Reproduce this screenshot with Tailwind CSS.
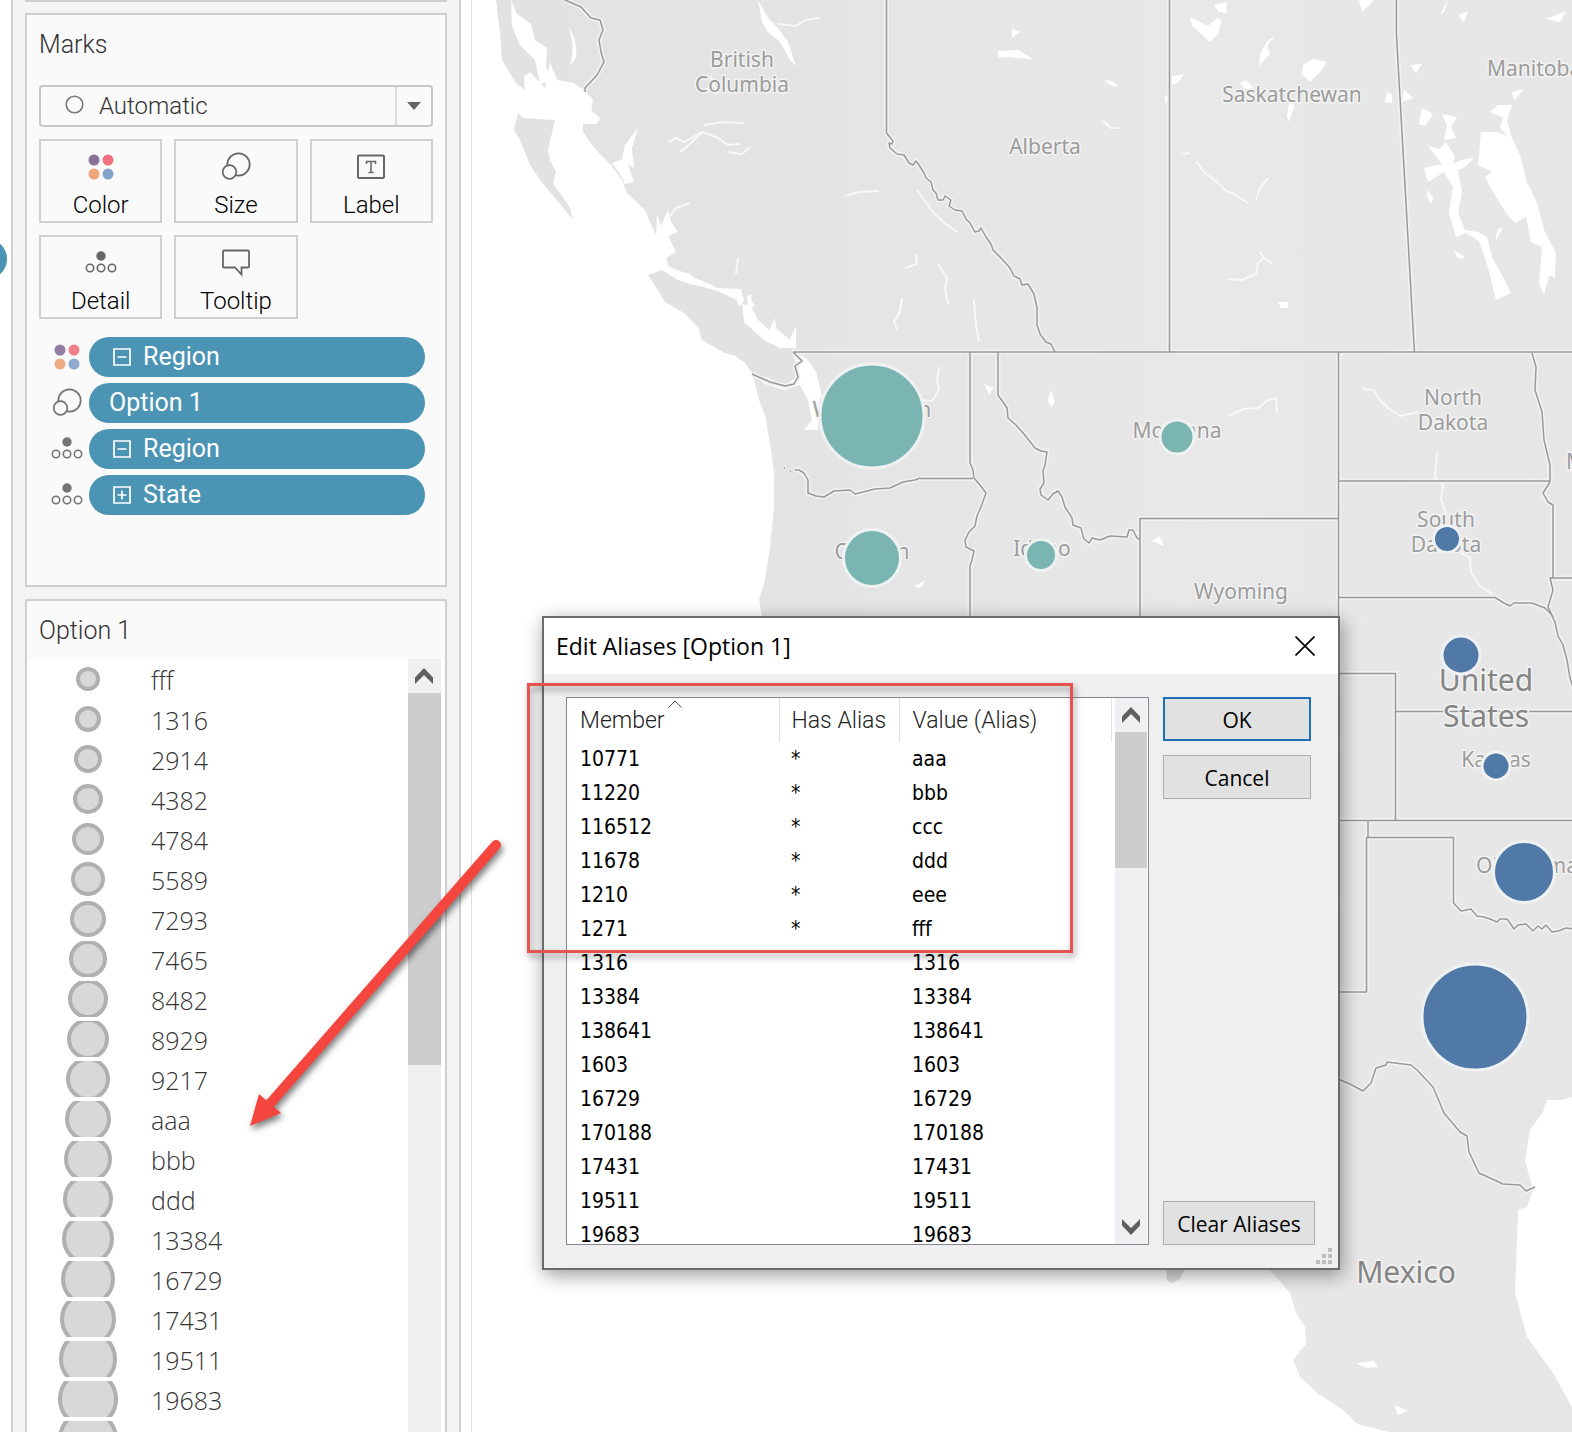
<!DOCTYPE html>
<html lang="en">
<head>
<meta charset="utf-8">
<meta name="viewport" content="width=device-width, initial-scale=1">
<title>Edit Aliases</title>
<script src="https://cdn.jsdelivr.net/npm/@tailwindcss/browser@4"></script>
</head>
<body class="bg-white">
<svg width="0" height="0" class="absolute" aria-hidden="true">
  <defs>
    <symbol id="i-color" viewBox="0 0 32 32"><circle cx="9" cy="9" r="5.5" fill="#87719a"/><circle cx="23" cy="9" r="5.5" fill="#f1717f"/><circle cx="9" cy="23" r="5.5" fill="#eda57a"/><circle cx="23" cy="23" r="5.5" fill="#83a3cb"/></symbol>
    <symbol id="i-size" viewBox="0 0 32 32"><g fill="#fafafa" stroke="#666" stroke-width="1.7"><circle cx="18.500" cy="13.500" r="11.200"/><circle cx="9.500" cy="21" r="6.800"/></g></symbol>
    <symbol id="i-label" viewBox="0 0 32 32"><rect x="3" y="4.500" width="26" height="22.500" rx="1" fill="none" stroke="#666" stroke-width="2"/><path d="M11.500 13v-2.500h9V13M16 10.500v11M13.500 21.500h5" fill="none" stroke="#666" stroke-width="1.500"/></symbol>
    <symbol id="i-detail" viewBox="0 0 32 32"><circle cx="16" cy="9" r="4.700" fill="#666"/><g fill="none" stroke="#666" stroke-width="1.600"><circle cx="5" cy="21" r="3.700"/><circle cx="16" cy="21" r="3.700"/><circle cx="27" cy="21" r="3.700"/></g></symbol>
    <symbol id="i-tooltip" viewBox="0 0 32 32"><path d="M4 3.500h24q1 0 1 1v15q0 1-1 1h-6.500v7L15 20.500H4q-1 0-1-1v-15q0-1 1-1z" fill="none" stroke="#666" stroke-width="1.800"/></symbol>
    <symbol id="i-minus" viewBox="0 0 18 18"><path d="M1 1h16v16H1zM4.500 9h9" fill="none" stroke="#fff" stroke-width="1.700"/></symbol>
    <symbol id="i-plus" viewBox="0 0 18 18"><path d="M1 1h16v16H1zM4.500 9h9M9 4.500v9" fill="none" stroke="#fff" stroke-width="1.700"/></symbol>
    <symbol id="i-up" viewBox="0 0 18 16"><path d="M0 9.500 9 0l9 9.500V16L9 7 0 16z" fill="#5f5f5f"/></symbol>
  </defs>
</svg>

<div class="relative flex h-screen overflow-hidden font-['Roboto',sans-serif] text-2xl font-light text-[#333]">
  <div class="relative w-[11px] shrink-0 overflow-hidden"><span class="absolute top-[239px] -left-[33px] h-10 w-10 rounded-full bg-[#4c94b3]"></span></div>

  <aside class="flex w-[450px] shrink-0 flex-col gap-3 border-x-2 border-[#d0d0d0] bg-[#f4f4f4] px-3">
    <div class="-mb-px h-0.5 shrink-0 bg-[#d0d0d0]"></div>
    <section class="h-[574px] shrink-0 border-2 border-[#d0d0d0] bg-[#fafafa] px-3 pt-3">
      <h2 class="h-[58px] text-[25px] leading-9">Marks</h2>
      <div class="relative">
        <select aria-label="Mark type" class="h-[42px] w-full appearance-none rounded-sm border-2 border-[#c8c8c8] bg-[#fafafa] pl-[58px] outline-none"><option>Automatic</option></select>
        <svg class="pointer-events-none absolute top-2.5 left-6.5 h-[19px] w-[19px]" viewBox="0 0 19 19"><circle cx="9.500" cy="9.500" r="8.300" fill="none" stroke="#777" stroke-width="1.600"/></svg>
        <span class="pointer-events-none absolute inset-y-0.5 right-0.5 flex w-9 items-center justify-center border-l-2 border-[#dcdcdc]"><svg class="h-2 w-3.5" viewBox="0 0 14 8"><path d="M0 0h14L7 8z" fill="#666"/></svg></span>
      </div>
      <div class="mt-3 grid grid-cols-3 gap-3 text-black">
        <button class="flex h-[84px] flex-col items-center gap-1 border-2 border-[#d0d0d0] pt-2.5 leading-9"><svg class="h-8 w-8 shrink-0"><use href="#i-color"/></svg>Color</button>
        <button class="flex h-[84px] flex-col items-center gap-1 border-2 border-[#d0d0d0] pt-2.5 leading-9"><svg class="h-8 w-8 shrink-0"><use href="#i-size"/></svg>Size</button>
        <button class="flex h-[84px] flex-col items-center gap-1 border-2 border-[#d0d0d0] pt-2.5 leading-9"><svg class="h-8 w-8 shrink-0"><use href="#i-label"/></svg>Label</button>
        <button class="flex h-[84px] flex-col items-center gap-1 border-2 border-[#d0d0d0] pt-2.5 leading-9"><svg class="h-8 w-8 shrink-0"><use href="#i-detail"/></svg>Detail</button>
        <button class="flex h-[84px] flex-col items-center gap-1 border-2 border-[#d0d0d0] pt-2.5 leading-9"><svg class="h-8 w-8 shrink-0"><use href="#i-tooltip"/></svg>Tooltip</button>
      </div>
      <ul class="mt-[18px] flex flex-col gap-1.5 pr-2 pl-3 text-[25px] font-normal text-white">
        <li class="flex items-center gap-1.5"><svg class="h-8 w-8 opacity-90"><use href="#i-color"/></svg><button class="flex h-10 flex-1 items-center gap-3 rounded-full bg-[#4c94b3] px-6"><svg class="h-[18px] w-[18px]"><use href="#i-minus"/></svg>Region</button></li>
        <li class="flex items-center gap-1.5"><svg class="h-8 w-8 opacity-90"><use href="#i-size"/></svg><button class="flex h-10 flex-1 items-center rounded-full bg-[#4c94b3] px-5">Option 1</button></li>
        <li class="flex items-center gap-1.5"><svg class="h-8 w-8 opacity-90"><use href="#i-detail"/></svg><button class="flex h-10 flex-1 items-center gap-3 rounded-full bg-[#4c94b3] px-6"><svg class="h-[18px] w-[18px]"><use href="#i-minus"/></svg>Region</button></li>
        <li class="flex items-center gap-1.5"><svg class="h-8 w-8 opacity-90"><use href="#i-detail"/></svg><button class="flex h-10 flex-1 items-center gap-3 rounded-full bg-[#4c94b3] px-6"><svg class="h-[18px] w-[18px]"><use href="#i-plus"/></svg>State</button></li>
      </ul>
    </section>

    <section class="flex min-h-0 flex-1 flex-col border-2 border-b-0 border-[#d0d0d0] bg-[#fafafa]">
      <h2 class="h-[58px] shrink-0 px-3 pt-3 text-[25px] leading-9">Option 1</h2>
      <div class="flex min-h-0 flex-1 bg-white">
        <ul id="sizes" class="min-w-0 flex-1 overflow-hidden pl-6 font-['Open_Sans',sans-serif] text-[25px] leading-8"></ul>
        <div class="mr-1 flex w-[33px] flex-col bg-[#f0f0f0]">
          <div class="flex h-[34px] items-center justify-center pr-0.5"><svg class="h-4 w-[18px]"><use href="#i-up"/></svg></div>
          <div class="h-[372px] bg-[#cdcdcd]"></div>
        </div>
      </div>
    </section>
  </aside>

  <div class="w-2.5 shrink-0"></div>

  <main class="min-w-0 flex-1 border-l border-[#e0e0e0]">
    <svg class="h-full w-full" viewBox="472 0 1100 1432" preserveAspectRatio="xMinYMin slice" role="img" aria-label="Map of marks by state">
      <defs>
        <linearGradient id="land" x1="0" y1="0" x2="1" y2="0"><stop offset="0" stop-color="#e2e2e2"/><stop offset=".3" stop-color="#e4e4e4"/><stop offset=".65" stop-color="#e8e8e8"/><stop offset="1" stop-color="#e6e6e6"/></linearGradient>
        <g id="borders" fill="none" stroke-linejoin="round">
          <path d="M793 352H1572M565 0l16 7 10 11 9 2 3 10-4 10 2 12 3 10-7 13-12 13v4M793 352l9 9-7 5 3 11-4 7-9 2-15-4-18-8"/>
          <path d="M886.500 0V133L893 141 892 144 889 143 890 148 897 154 904 155 909 163 913 165 916 161 919 165 924 173 926 178 931 182 933 190 936 193 938 200 943 200 945 196 951 200 949 206 955 210 962 211 966 219 970 223 975 232 979 231 981 228 986 237 991 244 993 250 1002 259 1010 268 1014 276 1020 279 1022 285 1028 284 1034 294 1037 308 1037 325 1040 334 1046 342 1051 344 1055 352"/>
          <path d="M1169.500 0v352M1396.400 0v34l18 318M970 352V463L973 470 974 478 980 485 986 493 981 507 977 516 975 526 969 532 965 540 966 547 974 551 972 560 970 566V619M920 478.500h53M784 468h1M790 471h1M795 470h4l5 3 4 7v13l8 3 8 1 10-6 16-1 5 4 20-5 15-1 13-6 12-2 5-2"/>
          <path d="M998 352V395L1003 402 1007 408 1008 418 1016 425 1024 434 1031 443 1035 448 1041 451 1047 452 1045 465 1043 471 1044 483 1040 489 1041 495 1048 500 1053 494 1058 491 1062 497 1065 507 1072 518 1073 525 1081 528 1084 539 1089 543 1092 538 1100 540 1110 536 1127 537 1129 530 1133 530 1137 538 1140 540M1140 619V518.500H1338M1338.500 352V690"/>
          <path d="M1338 481h212M1532 353L1536 367 1535 390 1542 412 1544 440 1550 465V482L1543 493 1548 502 1553 505V578M1572 578h-22L1553 590 1548 607 1553 617M1338 597.500H1495L1504 603 1510 606 1514 603 1532 603 1545 608 1551 614 1555 622 1558 636 1563 645 1567 660 1570 678 1574 690"/>
          <path d="M1339 673.500h56.500v147M1395 711.500h177M1339 820.500h233M1368 820v17.500M1339 992h27.500V837.500H1453.500V903L1461 911 1471 909 1477 916 1484 917 1490 919 1497 922 1500 919 1507 919 1510 923 1514 929 1518 925 1526 924 1533 931 1538 926 1542 929 1546 925 1552 932 1558 931 1566 928 1574 929"/>
          <path d="M1338 1079L1350 1084 1363 1091 1371 1083 1376 1068 1386 1065 1387 1062 1411 1065 1417 1070 1433 1087 1444 1113 1460 1132 1467 1136 1469 1152 1479 1173 1490 1178 1503 1184 1520 1185 1526 1191 1535 1187"/>
        </g>
      </defs>

      <path fill="url(#land)" d="M496 0L500 33 502 60 516 83 525 90 524 77 530 72 545 88 550 62 557 80 573 83 584 90 593 100 591 110 600 118 597 124 583 124 583 132 590 142 600 154 611 165 622 180 627 193 645 210 650 222 655 233 666 257 668 266 690 276 710 284 717 288 741 289 744 300 738 308 740 320 750 333 765 341 779 352 794 349 795 352 801 356 809 363 815 377 820 392 818 430 804 430 812 420 808 400 800 385 784 390 765 384 753 375 756 388 760 403 766 418 768 433 772 457 774 473 774 507 770 547 765 580 759 600 762 617 800 900 1150 1260 1270 1270 1290 1293 1296 1313 1305 1327 1306 1344 1293 1360 1300 1377 1317 1393 1343 1410 1357 1424 1393 1433H1572V1407L1553 1373 1527 1337 1515 1293 1517 1240 1518 1210 1527 1207 1533 1190 1525 1160 1530 1130 1543 1112 1547 1100 1562 1100 1572 1097V0z"/>
      <path fill="#e2e2e2" d="M518 113L523 118 555 120 548 150 550 160 556 172 553 184 565 200 570 208 573 220 555 198 540 180 530 165 520 140 514 130zM648 275L662 270 678 280 700 286 718 291 737 300 742 315 766 333 791 347 796 363 797 377 785 385 768 378 752 373 745 363 735 356 725 353 702 340 698 327 684 313 665 302 656 287z"/>
      <path fill="#fff" d="M1050 1272h218l-1-20H1060z"/>
      <path fill="#dedede" d="M1166 1268L1167 1280 1172 1283 1180 1279 1184 1270z"/>
      <g fill="#fff">
        <path d="M511 0L517 14 531 24 535 40 547 48 546 68 553 80 540 84 535 60 520 45 512 26zM568 26q10 14 8 32l-6 8q6-20-2-40zM758 0L768 18 778 28 788 42 796 66 790 60 780 42 768 32 762 22zM612 163L622 159 625 145 638 128 632 148 634 168 628 164 634 182 625 184 620 174zM657 214L661 226 668 210 671 222 678 232 668 236 676 252 666 258 656 238zM747 296L752 294 751 300 755 306 748 308zM742 303L752 308 758 320 769 330 775 318 776 328 790 340 796 326 796 348 780 348 764 340 744 322zM668 268L690 274 700 284 717 289 690 284 672 276zM796 352L808 360 816 372 822 396 815 404 806 382 798 372zM1190 17L1208 26 1217 18 1222 20 1218 34 1210 42 1192 26zM1012 29l8 3-8 6zM998 51l20-1 10 6 6 4-24-3-12 1zM1303 65L1313 59 1327 62 1320 72 1310 82 1302 74z"/>
        <path d="M1481 132L1497 132 1512 138 1521 157 1526 180 1537 203 1544 230 1556 253 1555 277 1549 276 1544 295 1539 283 1542 247 1531 242 1526 217 1515 223 1506 213 1492 190 1485 177 1492 172 1478 165zM1428 146L1440 149 1446 142 1455 157 1453 164 1461 160 1474 158 1464 168 1458 170 1462 193 1458 213 1465 230 1478 232 1487 237 1492 257 1503 277 1511 293 1496 300 1488 267 1479 241 1466 233 1456 237 1449 213 1453 187 1444 172 1428 182 1424 168 1442 164zM1442 114L1457 117 1451 127 1456 138 1444 140 1447 125zM1498 105L1512 105 1507 120 1513 142 1500 128 1503 118 1490 112zM1512 92l12-3-10 12zM1453 250L1464 256 1463 259 1457 257zM1498 229l5-1-8 14zM1428 190l5 8-2 6-4-8zM1422 108l11 6-8 12-6-2zM1440 14L1448 0 1444 12zM1458 15l10-4-4 11zM1546 19l20-8-6 11zM1278 302h10v6h-7zM1172 76l12-2-6 9-7 2zM1165 94l4 6-4 3zM1388 92l4 3v8l-8-1zM1404 90l9 8-11 4zM1410 65l12-1-6 9zM1359 0h15l-12 12zM1275 36l-8 10 3 8-11 12 1-12 8-14zM1214 5l12-3 1 11-8-1zM1104 80l8 1 6 6-8-2zM1240 83l6-3 8 8-10 1zM1289 103l6 2-6 17-2-6zM1051 390L1055 402 1051 408 1048 400zM984 384l10 4-5 6zM914 586l12-6-6 8zM1152 541l8-5 4 10zM1356 1363l18-2 4 6-12 1zM1394 1405l14 6-10 4z"/>
      </g>
      <g fill="none" stroke="#f8f8f8" stroke-width="2" stroke-linejoin="round">
        <path d="M668 142L676 138 684 142 702 132 718 138 728 145 740 144M702 132L690 144 680 152M728 152l14 2 8-7M704 125l20-3 20 1M845 196l14-4 20-1M917 190L933 212 943 222 957 232M916 254L917 264 905 268M938 264L947 278 945 288 948 304M902 298L900 312 894 322 897 330M974 300L976 326 979 342M710 76l8 18M778 24L796 26 805 20 820 18M668 218L676 208 690 203M1182 154l8-1M1196 161L1204 172 1216 181 1226 191 1234 194 1248 203M1256 200L1260 188 1268 178M1228 279L1242 280 1256 274 1258 263 1264 258 1272 264M1260 252l4 6M1103 121l8 7 8 0M939 367L937 379 939 390 932 401 922 400M1228 416L1232 414 1244 409 1258 408 1268 400 1276 398 1277 413M1362 389L1374 390 1380 400 1388 408 1400 416 1418 412M1437 453L1435 477 1443 485 1441 500 1446 514M1460 552L1470 558 1471 572 1480 586 1492 594M736 274l2-16"/>
      </g>

      <g font-family="'Noto Sans', sans-serif" font-size="21" font-weight="400" fill="#9c9c9c" text-anchor="middle" stroke="#f3f3f3" stroke-width="3" paint-order="stroke" stroke-linejoin="round">
        <use href="#borders" stroke="#f1f1f1" stroke-width="5"/>
        <use href="#borders" stroke="#999" stroke-width="1.500"/>
        <text x="742" y="67">British</text><text x="742" y="92">Columbia</text>
        <text x="1045" y="154">Alberta</text><text x="1292" y="102">Saskatchewan</text>
        <text x="1487" y="76" text-anchor="start">Manitoba</text>
        <text x="872" y="417">Washington</text><text x="872" y="559">Oregon</text>
        <text x="1042" y="556">Idaho</text><text x="1177" y="438">Montana</text>
        <text x="1453" y="405">North</text><text x="1453" y="430">Dakota</text>
        <text x="1446" y="527">South</text><text x="1446" y="552">Dakota</text>
        <text x="1241" y="599">Wyoming</text><text x="1566" y="469" text-anchor="start">Minnesota</text>
        <text x="1341" y="749" text-anchor="end">Colorado</text><text x="1341" y="907" text-anchor="end">New Mexico</text>
        <text x="1496" y="767">Kansas</text><text x="1476" y="873" text-anchor="start">Oklahoma</text>
        <g font-size="30" fill="#858585"><text x="1486" y="691">United</text><text x="1486" y="727">States</text><text x="1406" y="1283">Mexico</text></g>
      </g>
      <g fill="#7ab5b1" stroke="#f0f2f2" stroke-width="3"><circle cx="872" cy="416" r="52"/><circle cx="872" cy="558" r="28.500"/><circle cx="1041" cy="555" r="15.500"/><circle cx="1177" cy="437" r="17"/></g>
      <g fill="#5079a7" stroke="#eff1f3" stroke-width="3"><circle cx="1447" cy="539" r="13.500"/><circle cx="1461" cy="655" r="19"/><circle cx="1496" cy="766" r="14"/><circle cx="1524" cy="872" r="30.500"/><circle cx="1475" cy="1017" r="53"/></g>
    </svg>
  </main>

  <div role="dialog" aria-labelledby="dlg" class="absolute top-[616px] left-[542px] flex h-[654px] w-[798px] flex-col border-2 border-[#6b6b6b] bg-[#efefef] font-['Open_Sans',sans-serif] text-[21px] font-normal text-black shadow-[2px_5px_18px_rgba(0,0,0,0.4)]">
    <header class="flex h-14 shrink-0 items-center justify-between bg-white pr-[23px] pl-3">
      <h1 id="dlg" class="text-[23px]">Edit Aliases [Option 1]</h1>
      <button aria-label="Close"><svg class="h-5 w-5" viewBox="0 0 20 20"><path d="M.5.5l19 19M19.500.5l-19 19" stroke="#000" stroke-width="1.700"/></svg></button>
    </header>
    <div class="flex min-h-0 flex-1 gap-3.5 px-[22px] pt-[23px] pb-[23px]">
      <div class="flex w-[583px] shrink-0 overflow-hidden border border-[#828790] bg-white">
        <div class="relative min-w-0 flex-1 overflow-hidden">
          <table class="w-[545px] table-fixed border-collapse text-left">
            <thead class="font-['Roboto',sans-serif] text-[23px] text-[#222]">
              <tr class="h-[44px]"><th class="w-[212px] border-r border-[#e0e0e0] pt-0.5 pl-[13px] font-light">Member</th><th class="w-[120px] border-r border-[#e0e0e0] pt-0.5 pl-3 font-light whitespace-nowrap">Has Alias</th><th class="border-r border-[#e0e0e0] pt-0.5 pl-[13px] font-light">Value (Alias)</th></tr>
            </thead>
            <tbody id="aliases" class="font-['DejaVu_Sans_Condensed','Noto_Sans',sans-serif]"></tbody>
          </table>
          <svg class="absolute top-0.5 left-[101px] h-2 w-3.5" viewBox="0 0 14 8"><path d="M.5 7.500 7 1l6.500 6.500" fill="none" stroke="#555"/></svg>
        </div>
        <div class="mr-px flex w-8 shrink-0 flex-col bg-[#f0f0f2]">
          <div class="flex h-[34px] shrink-0 items-center justify-center"><svg class="h-4 w-[18px]"><use href="#i-up"/></svg></div>
          <div class="h-[136px] bg-[#cdcdcd]"></div>
          <div class="mt-auto flex h-[34px] items-center justify-center"><svg class="h-4 w-[18px] rotate-180"><use href="#i-up"/></svg></div>
        </div>
      </div>
      <div class="flex w-[152px] shrink-0 flex-col items-start gap-3.5">
        <button class="h-11 w-[148px] border-2 border-[#1f70b8] bg-[#e1e1e1] pt-0.5">OK</button>
        <button class="h-11 w-[148px] border border-[#adadad] bg-[#e1e1e1] pt-0.5">Cancel</button>
        <button class="mt-auto h-11 w-full border border-[#adadad] bg-[#e1e1e1] pt-0.5 whitespace-nowrap">Clear Aliases</button>
      </div>
    </div>
    <svg class="absolute right-1.5 bottom-1 h-4 w-4" viewBox="0 0 16 16"><path d="M12 0h4v4h-4zM6 6h4v4H6zM12 6h4v4h-4zM0 12h4v4H0zM6 12h4v4H6zM12 12h4v4h-4z" fill="#bdbdbd"/></svg>
  </div>

  <div class="pointer-events-none absolute top-[683px] left-[527px] h-[270px] w-[546px] border-3 border-[#e4534f] drop-shadow-[2px_4px_3px_rgba(0,0,0,0.4)]"></div>
  <svg class="pointer-events-none absolute top-[830px] left-[240px] h-[310px] w-[270px] drop-shadow-[2px_4px_3px_rgba(0,0,0,0.5)]" viewBox="240 830 270 310"><path d="M496 845 268 1106" stroke="#f5453f" stroke-width="10" stroke-linecap="round"/><path d="M250 1126l9-32 22 19z" fill="#f5453f"/></svg>
</div>

<script>
  const sizes = ['fff','1316','2914','4382','4784','5589','7293','7465','8482','8929','9217','aaa','bbb','ddd','13384','16729','17431','19511','19683',''];
  document.getElementById('sizes').innerHTML = sizes.map((t, i) => {
    const d = 24 + 2 * Math.min(i, 18);
    return `<li class="flex h-10 items-center gap-[26px]"><span class="flex h-9 w-[74px] shrink-0 items-center justify-center overflow-hidden"><span class="shrink-0 rounded-full border-4 border-[#b0b0b0] bg-[#d8d8d8]" style="width:${d}px;height:${d}px"></span></span><span class="pt-0.5">${t}</span></li>`;
  }).join('');

  const aliases = [['10771','aaa'],['11220','bbb'],['116512','ccc'],['11678','ddd'],['1210','eee'],['1271','fff'],['1316'],['13384'],['138641'],['1603'],['16729'],['170188'],['17431'],['19511'],['19683']];
  document.getElementById('aliases').innerHTML = aliases.map(([m, v]) =>
    `<tr class="h-[34px]"><td class="pl-[13px]">${m}</td><td class="pl-3">${v ? '*' : ''}</td><td class="pl-[13px]">${v || m}</td></tr>`
  ).join('');
</script>
</body>
</html>
